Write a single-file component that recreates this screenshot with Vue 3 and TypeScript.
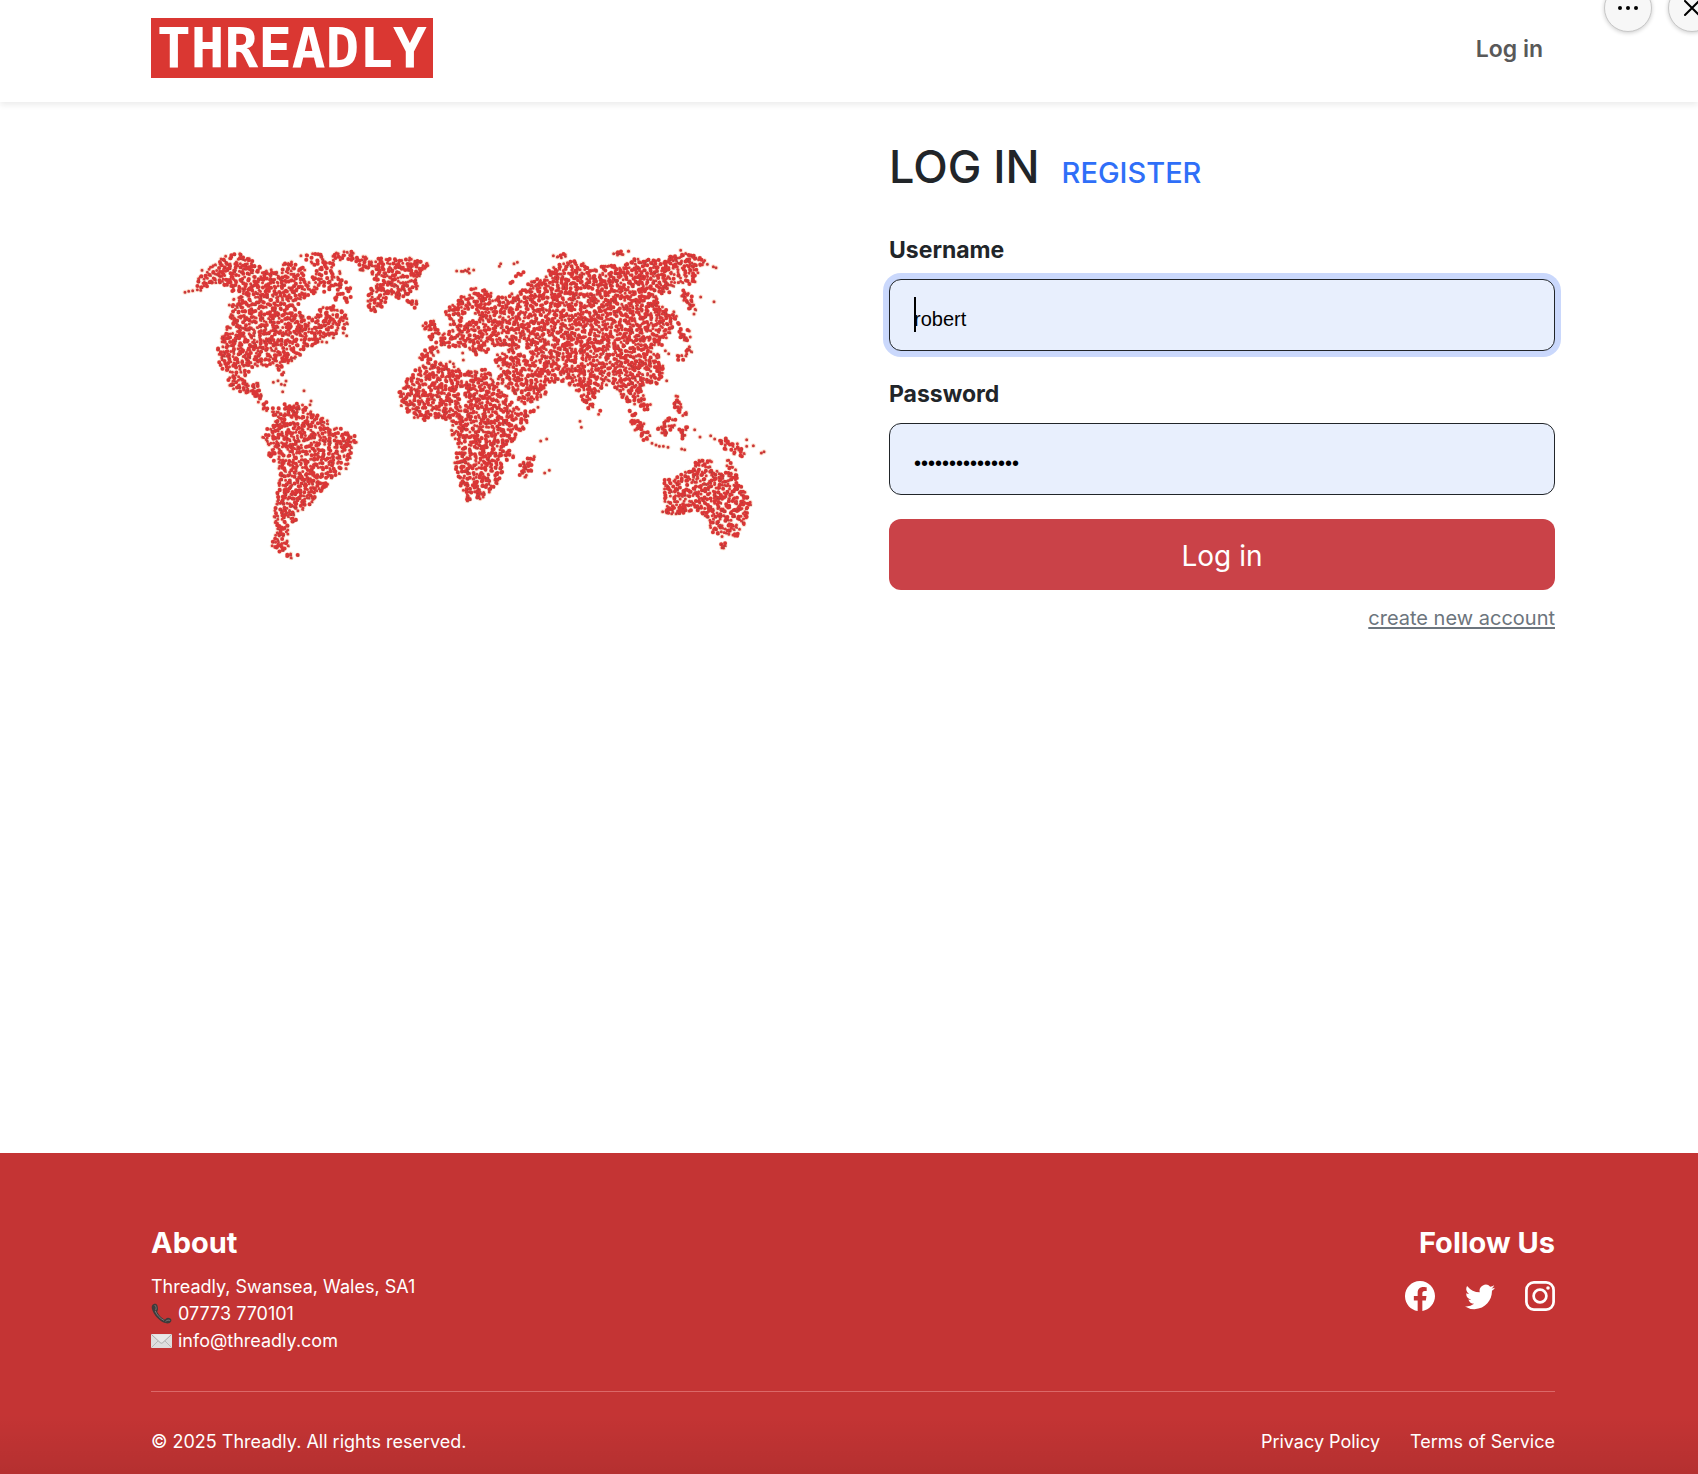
<script setup lang="ts">
import { ref } from 'vue'

type Point = [number, number]
interface Region {
  density: number
  shape: Point[]
}

const username = ref('robert')
const password = ref('threadly-secret')

/* Parses "x,y x,y ..." and shifts it into the map's coordinate space. */
function outline(text: string, dx = 0, density = 1): Region {
  const shape = text.split(' ').map((pair): Point => {
    const [x, y] = pair.split(',').map(Number)
    return [x + dx, y]
  })
  return { density, shape }
}

const EAST = 660

const land: Region[] = [
  // North America
  outline('82,150 128,108 163,82 205,72 242,90 280,116 330,128 375,133 400,150 425,165 445,180 430,200 395,210 382,235 410,262 430,270 452,235 490,226 525,248 540,294 512,304 477,326 442,348 402,368 382,390 345,405 341,442 323,434 316,412 280,412 240,424 226,440 237,470 247,490 220,498 180,478 174,450 190,432 155,424 141,390 145,340 155,310 180,285 181,250 191,215 191,190 165,170 130,158 100,182 82,180'),
  outline('232,478 264,460 278,475 275,500 290,515 294,547 274,538 260,512 236,496'),
  outline('330,103 360,95 404,118 407,162 348,147'),
  outline('484,70 555,66 592,86 577,107 540,100 488,102'),
  outline('385,72 465,75 460,95 480,95 500,105 515,130 530,160 550,180 542,218 513,225 482,207 490,192 430,192 410,165 430,130 455,115 395,98', 0, 0.65),
  // Greenland and Iceland
  outline('568,90 620,86 700,90 740,81 757,103 785,101 783,117 757,124 752,150 737,187 692,207 652,217 615,257 594,237 594,200 611,160 601,130 568,122'),
  outline('706,211 740,208 739,240 716,230'),
  // South America
  outline('302,536 345,525 380,521 417,536 434,558 470,563 477,596 510,598 568,628 552,662 538,692 532,724 482,747 467,777 442,805 412,833 387,848 377,874 357,887 353,930 357,952 330,971 304,952 308,930 321,900 308,860 321,820 321,780 331,740 326,712 296,682 291,645 271,625 291,598 316,578'),
  outline('343,972 384,978 362,994'),
  // Africa
  outline('88,401 150,396 192,411 220,426 292,421 313,450 343,490 378,530 392,548 440,542 408,592 373,632 353,660 378,675 362,700 338,690 340,732 323,772 282,808 230,818 211,780 201,730 191,700 206,650 181,610 186,577 150,564 85,578 36,548 26,490 46,458 72,427', EAST),
  outline('392,698 434,675 428,722 403,750 385,737', EAST),
  // British Isles
  outline('115,268 137,272 151,314 120,335 115,308 92,300', EAST),
  // Europe and Asia
  outline('167,248 192,212 250,176 290,185 330,206 400,182 428,146 460,155 478,121 540,91 580,94 600,114 640,108 700,111 715,90 790,91 830,86 870,68 922,82 952,98 927,127 912,170 860,162 842,192 797,197 804,225 833,245 849,280 844,314 818,347 793,362 815,385 825,432 802,463 754,472 759,495 785,525 768,551 738,525 725,531 692,503 677,478 650,468 627,483 614,517 602,551 585,535 567,492 547,473 520,458 473,463 470,492 442,515 400,533 378,513 348,473 322,452 327,420 312,385 330,370 350,370 345,357 300,347 291,372 262,385 233,353 190,355 160,353 142,372 118,395 89,393 89,368 128,347 157,315 187,300 172,272', EAST),
  outline('358,167 373,133 407,128 382,152', EAST),
  outline('483,72 532,75 515,95', EAST, 0.9),
  outline('670,66 720,66 688,84', EAST, 0.9),
  outline('875,178 907,203 917,243 895,240 872,205', EAST),
  outline('828,233 852,248 893,327 872,327 848,270', EAST, 0.9),
  outline('898,288 908,298 896,343 912,370 870,408 857,380 885,370 879,330', EAST, 0.9),
  // South-east Asia and Oceania
  outline('842,483 864,488 872,523 898,560 876,560 848,540 853,515', EAST, 0.9),
  outline('718,536 754,570 785,628 765,638 720,590', EAST),
  outline('797,605 836,565 858,568 853,600 825,625', EAST),
  outline('866,597 897,594 888,637 866,635', EAST, 0.8),
  outline('982,635 1010,625 1047,646 1073,690 1033,680 1027,665 990,657', EAST),
  outline('613,540 632,543 625,567', EAST),
  outline('822,752 868,742 898,712 933,691 973,691 969,718 998,736 1012,691 1038,713 1049,760 1084,820 1069,872 1045,921 1000,925 965,908 956,872 928,843 870,854 826,851 824,800', EAST),
  outline('988,943 1012,940 998,964', EAST),
]

const water: Region[] = [
  outline('390,335 405,335 408,355 428,380 405,388 392,360', EAST),
  outline('225,250 245,240 265,270 240,275 210,290', EAST),
  outline('340,470 358,478 402,540 388,540', EAST),
  outline('205,480 215,480 235,530 225,530', EAST),
  outline('770,485 790,478 790,500', EAST),
]

const islets: Point[] = [
  [45, 190], [56, 187], [68, 185], [82, 182], [92, 184], [96, 124], [112, 130], [178, 228], [310, 460], [324, 455], [334, 466],
  [348, 456], [344, 468], [338, 488], [402, 485], [423, 516], [420, 527], [520, 312], [530, 320], [490, 326], [470, 340],
  [860, 126], [874, 127], [886, 124], [896, 120], [898, 132], [911, 123], [988, 112], [992, 104], [1032, 104], [1042, 100],
  [880, 127], [892, 127], [1331, 74], [1340, 72], [1532, 64], [1345, 75], [1348, 74], [1355, 76], [1150, 80], [1162, 84],
  [1174, 86], [1186, 82], [1510, 95], [1525, 103], [1600, 100], [1612, 106], [1630, 113], [1638, 116], [1592, 204],
  [1632, 218], [1490, 455], [1230, 577], [1234, 595], [1112, 636], [1130, 630], [1104, 535], [1124, 732], [1138, 724],
  [812, 402], [840, 398], [850, 404], [878, 372], [880, 393], [1446, 643], [1458, 648], [1468, 652], [1480, 652],
  [1494, 655], [1535, 660], [1544, 662], [1574, 602], [1590, 624], [1622, 620], [1634, 630], [1730, 632], [1730, 652],
  [1750, 650], [1774, 672], [1782, 668], [1478, 848], [1490, 851], [1505, 854], [1518, 854], [1496, 374], [1486, 365],
  [1572, 255], [1550, 375], [1676, 694], [1654, 946], [1662, 950], [1656, 956],
]

function contains(shape: Point[], x: number, y: number): boolean {
  let inside = false
  for (let i = 0, j = shape.length - 1; i < shape.length; j = i++) {
    const [xi, yi] = shape[i]
    const [xj, yj] = shape[j]
    if (yi > y !== yj > y && x < ((xj - xi) * (y - yi)) / (yj - yi) + xi) inside = !inside
  }
  return inside
}

let seed = 20250
function random(): number {
  seed = (seed * 1664525 + 1013904223) % 4294967296
  return seed / 4294967296
}

const dot = (x: number, y: number): string => `M${x.toFixed(1)} ${y.toFixed(1)}h0`

let large = ''
let small = ''
let shade = ''
const STEP = 9
for (let row = 56; row < 1000; row += STEP) {
  for (let col = 24; col < 1800; col += STEP) {
    const x = col + (random() - 0.5) * 16
    const y = row + (random() - 0.5) * 16
    const pick = random()
    const dark = random()
    const region = land.find((r) => contains(r.shape, x, y))
    if (!region || pick > region.density) continue
    if (water.some((r) => contains(r.shape, x, y))) continue
    if (pick < 0.5) large += dot(x, y)
    else small += dot(x, y)
    if (dark < 0.34) shade += dot(x + 3, y + 3)
  }
}
for (const [x, y] of islets) {
  small += dot(x, y)
  shade += dot(x + 1, y + 1)
}
</script>

<template>
  <div class="page">
    <header class="header">
      <a class="logo" href="#" aria-label="Threadly home">THREADLY</a>
      <nav><a class="nav-link" href="#login">Log in</a></nav>
    </header>

    <div class="tools">
      <button type="button" class="tool" aria-label="More options">
        <svg viewBox="0 0 24 24" width="24" height="24"><g fill="#000"><circle cx="4" cy="12" r="2" /><circle cx="12" cy="12" r="2" /><circle cx="20" cy="12" r="2" /></g></svg>
      </button>
      <button type="button" class="tool" aria-label="Close">
        <svg viewBox="0 0 24 24" width="24" height="24"><path d="M5 5 19 19M19 5 5 19" fill="none" stroke="#000" stroke-width="2" stroke-linecap="round" /></svg>
      </button>
    </div>

    <main class="main">
      <div class="picture">
        <svg class="map" viewBox="0 0 1860 1020" role="img" aria-label="World map">
          <g fill="none" stroke-linecap="round">
            <path :d="large + small" stroke="#fbe6d6" stroke-width="15" />
            <path :d="small" stroke="#d93a3a" stroke-width="9" />
            <path :d="large" stroke="#da3636" stroke-width="12" />
            <path :d="shade" stroke="#96433f" stroke-opacity="0.75" stroke-width="4" />
          </g>
        </svg>
      </div>

      <section class="panel">
        <div class="titles">
          <h1>LOG IN</h1>
          <a class="register" href="#register">REGISTER</a>
        </div>
        <form class="form" @submit.prevent>
          <div class="field">
            <label for="username">Username</label>
            <div class="control">
              <input id="username" v-model="username" class="focused" type="text" autocomplete="off" />
              <span class="caret"></span>
            </div>
          </div>
          <div class="field">
            <label for="password">Password</label>
            <input id="password" v-model="password" type="password" autocomplete="off" />
          </div>
          <button class="submit" type="submit">Log in</button>
          <a class="create" href="#register">create new account</a>
        </form>
      </section>
    </main>

    <footer class="footer">
      <div class="footer-top">
        <section>
          <h2>About</h2>
          <address>
            <span>Threadly, Swansea, Wales, SA1</span>
            <span class="contact">
              <svg viewBox="0 0 21 21" width="21" height="21" aria-hidden="true">
                <path d="M3.4.8C1 1.300.300 3.300.900 5.800c1.500 6 7.600 12.600 13.200 14.200 2.300.7 4.900.6 6-1.500.6-1.200.3-2.200-.8-2.900-1.300-.8-3-1.100-4.100-.1-.8.8-1.400 1.300-2.300.7-2.800-1.700-5-4-6.500-6.900-.6-1 .3-1.500.5-2.400.4-1.500-.2-5.300-1.700-6C4.700.6 4 .6 3.400.8Z" fill="#3d3b3b" />
                <path d="M4 2.300c1.300 1 1.600 3.500.8 4.600M14.800 18.300c1.300-1.500 3.100-1.500 4-.9M4.300 8.300c1.700 3.900 4.600 7 8.400 9" fill="none" stroke="#777" stroke-width="1" stroke-linecap="round" />
              </svg>
              07773 770101
            </span>
            <span class="contact">
              <svg viewBox="0 0 21 21" width="21" height="21" aria-hidden="true">
                <rect x="0" y="4" width="21" height="14" rx="1" fill="#dedede" />
                <path d="M1 17 7.500 10.500M20 17 13.500 10.500" fill="none" stroke="#b9b9b9" />
                <path d="M.5 4.500 9.300 12.700q1.200 1 2.400 0L20.500 4.500" fill="#e8e8e8" stroke="#a9a9a9" />
              </svg>
              info@threadly.com
            </span>
          </address>
        </section>
        <section class="follow">
          <h2>Follow Us</h2>
          <div class="social">
            <a href="#facebook" aria-label="Facebook">
              <svg viewBox="0 0 16 16" width="30" height="30" fill="currentColor"><path d="M16 8.049c0-4.446-3.582-8.050-8-8.050C3.580 0-.002 3.603-.002 8.050c0 4.017 2.926 7.347 6.750 7.951v-5.625h-2.030V8.050H6.750V6.275c0-2.017 1.195-3.131 3.022-3.131.876 0 1.791.157 1.791.157v1.980h-1.009c-.993 0-1.303.621-1.303 1.258v1.510h2.218l-.354 2.326H9.250V16c3.824-.604 6.750-3.934 6.750-7.951" /></svg>
            </a>
            <a href="#twitter" aria-label="Twitter">
              <svg viewBox="0 0 16 16" width="30" height="30" fill="currentColor"><path d="M5.026 15c6.038 0 9.341-5.003 9.341-9.334q.002-.211-.006-.422A6.700 6.700 0 0 0 16 3.542a6.700 6.700 0 0 1-1.889.518 3.300 3.300 0 0 0 1.447-1.817 6.500 6.500 0 0 1-2.087.793A3.286 3.286 0 0 0 7.875 6.030a9.320 9.320 0 0 1-6.767-3.429 3.290 3.290 0 0 0 1.018 4.382A3.300 3.300 0 0 1 .640 6.575v.045a3.290 3.290 0 0 0 2.632 3.218 3.200 3.200 0 0 1-.865.115 3 3 0 0 1-.614-.057 3.280 3.280 0 0 0 3.067 2.277A6.600 6.600 0 0 1 .780 13.580a6 6 0 0 1-.780-.045A9.340 9.340 0 0 0 5.026 15" /></svg>
            </a>
            <a href="#instagram" aria-label="Instagram">
              <svg viewBox="0 0 16 16" width="30" height="30" fill="none" stroke="currentColor"><rect x="0.750" y="0.750" width="14.500" height="14.500" rx="4" stroke-width="1.450" /><circle cx="8" cy="8" r="3.400" stroke-width="1.450" /><circle cx="12.270" cy="3.730" r="0.960" fill="currentColor" stroke="none" /></svg>
            </a>
          </div>
        </section>
      </div>
      <div class="footer-bottom">
        <span>© 2025 Threadly. All rights reserved.</span>
        <nav class="legal">
          <a href="#privacy">Privacy Policy</a>
          <a href="#terms">Terms of Service</a>
        </nav>
      </div>
    </footer>
  </div>
</template>

<style>
body {
  margin: 0;
}
</style>

<style scoped>
* {
  box-sizing: border-box;
}
.page {
  --gutters: 143px 0 151px;
  position: relative;
  display: flex;
  flex-direction: column;
  min-height: 100vh;
  overflow: hidden;
  background: #fff;
  color: #212529;
  font-family: Inter, "Liberation Sans", sans-serif;
  font-size: 18px;
  line-height: 27px;
}
a {
  color: inherit;
  text-decoration: none;
}
h1,
h2 {
  margin: 0;
}
.header {
  display: flex;
  align-items: center;
  justify-content: space-between;
  padding: 18px var(--gutters);
  padding-bottom: 24px;
  box-shadow: 0 3px 6px rgba(0, 0, 0, 0.08);
}
.logo {
  display: block;
  padding: 0 6px;
  background: #da3732;
  color: #fff;
  font: 700 56px/60px "DejaVu Sans Mono", monospace;
}
.nav-link {
  display: block;
  padding: 3px 12px 0;
  color: #595959;
  font-size: 23px;
  font-weight: 600;
}
.tools {
  position: absolute;
  top: -16px;
  right: -18px;
  display: flex;
  gap: 16px;
}
.tool {
  display: grid;
  place-items: center;
  width: 48px;
  height: 48px;
  padding: 0;
  border: 1px solid #c8c8c8;
  border-radius: 50%;
  background: #f7f7f7;
  box-shadow: 0 1px 4px rgba(0, 0, 0, 0.2);
}
.main {
  flex: 1;
  display: grid;
  grid-template-columns: 1fr 1fr;
  gap: 72px;
  padding: 38px var(--gutters);
}
.picture {
  padding: 89px 0 0 19px;
}
.map {
  display: block;
  width: 100%;
  max-width: 620px;
}
.titles {
  display: flex;
  align-items: baseline;
  gap: 22px;
}
h1 {
  font-size: 45px;
  font-weight: 500;
  line-height: 54px;
}
.register {
  color: #2f6ff8;
  font-size: 29px;
  font-weight: 500;
}
.form {
  display: flex;
  flex-direction: column;
  gap: 24px;
  padding-top: 38px;
}
.field label {
  display: block;
  padding-bottom: 11px;
  font-size: 23px;
  font-weight: 700;
  line-height: 36px;
}
.field + .field label {
  padding-top: 1px;
}
.control {
  position: relative;
}
.field input {
  display: block;
  width: 100%;
  height: 72px;
  padding: 9px 24px 0;
  border: 1px solid #212529;
  border-radius: 12px;
  outline: none;
  background: #e8effd;
  color: #000;
  font: 20px "Liberation Sans", sans-serif;
}
.field .focused {
  box-shadow: 0 0 0 6px #cad8fc;
}
.caret {
  position: absolute;
  top: 18px;
  left: 25px;
  width: 2px;
  height: 35px;
  background: #000;
}
.submit {
  height: 71px;
  padding: 3px 0 0;
  border: 0;
  border-radius: 12px;
  background: #ca4248;
  color: #fff;
  font: 400 28px Inter, sans-serif;
}
.create {
  align-self: flex-end;
  margin-top: -9px;
  color: #6c757d;
  font-size: 20px;
  text-decoration: underline;
  text-decoration-thickness: 2px;
  text-underline-offset: 2px;
}
.footer {
  padding: 72px var(--gutters);
  padding-bottom: 19px;
  background: #c43434 linear-gradient(to top, rgba(0, 0, 0, 0.08), transparent 60px);
  color: #fff;
}
.footer-top {
  display: flex;
  justify-content: space-between;
  padding-bottom: 37px;
  border-bottom: 1px solid #db6868;
}
h2 {
  padding-bottom: 12px;
  font-size: 29px;
  font-weight: 700;
  line-height: 36px;
}
address {
  display: flex;
  flex-direction: column;
  font-style: normal;
}
.contact {
  display: flex;
  align-items: center;
  gap: 6px;
}
.follow {
  display: flex;
  flex-direction: column;
  align-items: flex-end;
}
.social {
  display: flex;
  gap: 30px;
  padding-top: 8px;
}
.social svg {
  display: block;
}
.footer-bottom {
  display: flex;
  justify-content: space-between;
  padding-top: 36px;
}
.legal {
  display: flex;
  gap: 30px;
}
</style>
